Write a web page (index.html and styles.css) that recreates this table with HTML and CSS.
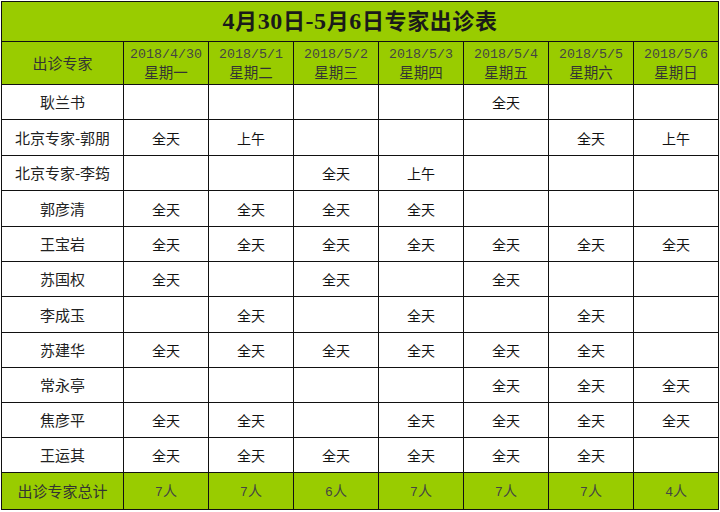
FILE: index.html
```html
<!DOCTYPE html>
<html lang="zh">
<head>
<meta charset="utf-8">
<title>专家出诊表</title>
<link rel="stylesheet" href="styles.css">
</head>
<body>
<div class="wrap">
<table class="sched">
<colgroup>
<col class="c-name"><col class="c-day"><col class="c-day"><col class="c-day"><col class="c-day"><col class="c-day"><col class="c-day"><col class="c-day">
</colgroup>
<thead>
<tr class="r-title"><th colspan="8" class="title"><span class="num">4</span>月<span class="num">30</span>日<span class="num">-5</span>月<span class="num">6</span>日专家出诊表</th></tr>
<tr class="r-head">
<th class="h-name">出诊专家</th>
<th><span class="date">2018/4/30</span><span class="wd">星期一</span></th>
<th><span class="date">2018/5/1</span><span class="wd">星期二</span></th>
<th><span class="date">2018/5/2</span><span class="wd">星期三</span></th>
<th><span class="date">2018/5/3</span><span class="wd">星期四</span></th>
<th><span class="date">2018/5/4</span><span class="wd">星期五</span></th>
<th><span class="date">2018/5/5</span><span class="wd">星期六</span></th>
<th><span class="date">2018/5/6</span><span class="wd">星期日</span></th>
</tr>
</thead>
<tbody>
<tr class="r-a"><td class="name">耿兰书</td><td></td><td></td><td></td><td></td><td>全天</td><td></td><td></td></tr>
<tr class="r-b"><td class="name">北京专家-郭朋</td><td>全天</td><td>上午</td><td></td><td></td><td></td><td>全天</td><td>上午</td></tr>
<tr class="r-a"><td class="name">北京专家-李筠</td><td></td><td></td><td>全天</td><td>上午</td><td></td><td></td><td></td></tr>
<tr class="r-b"><td class="name">郭彦清</td><td>全天</td><td>全天</td><td>全天</td><td>全天</td><td></td><td></td><td></td></tr>
<tr class="r-a"><td class="name">王宝岩</td><td>全天</td><td>全天</td><td>全天</td><td>全天</td><td>全天</td><td>全天</td><td>全天</td></tr>
<tr class="r-a"><td class="name">苏国权</td><td>全天</td><td></td><td>全天</td><td></td><td>全天</td><td></td><td></td></tr>
<tr class="r-b"><td class="name">李成玉</td><td></td><td>全天</td><td></td><td>全天</td><td></td><td>全天</td><td></td></tr>
<tr class="r-a"><td class="name">苏建华</td><td>全天</td><td>全天</td><td>全天</td><td>全天</td><td>全天</td><td>全天</td><td></td></tr>
<tr class="r-a"><td class="name">常永亭</td><td></td><td></td><td></td><td></td><td>全天</td><td>全天</td><td>全天</td></tr>
<tr class="r-a"><td class="name">焦彦平</td><td>全天</td><td>全天</td><td></td><td>全天</td><td>全天</td><td>全天</td><td>全天</td></tr>
<tr class="r-a"><td class="name">王运其</td><td>全天</td><td>全天</td><td>全天</td><td>全天</td><td>全天</td><td>全天</td><td></td></tr>
</tbody>
<tfoot>
<tr class="r-foot">
<td class="f-name">出诊专家总计</td>
<td><span class="num-s">7</span>人</td>
<td><span class="num-s">7</span>人</td>
<td><span class="num-s">6</span>人</td>
<td><span class="num-s">7</span>人</td>
<td><span class="num-s">7</span>人</td>
<td><span class="num-s">7</span>人</td>
<td><span class="num-s">4</span>人</td>
</tr>
</tfoot>
</table>
</div>
</body>
</html>
```

FILE: styles.css
```css
html, body {
  margin: 0;
  padding: 0;
  background: #ffffff;
}
.wrap {
  padding: 1px 0 0 1px;
}
.sched {
  border-collapse: collapse;
  table-layout: fixed;
  width: 718px;
  font-family: "Noto Sans CJK SC", "Noto Sans", sans-serif;
  color: #111;
}
.c-name { width: 122px; }
.c-day { width: 85px; }
.sched th, .sched td {
  border: 1px solid #111;
  padding: 0;
  text-align: center;
  vertical-align: middle;
  font-weight: normal;
  font-size: 14px;
  line-height: 16px;
}
.r-title th, .r-head th, .r-foot td {
  background: #99cc00;
}
.r-title { height: 40px; }
.title {
  font-family: "Liberation Serif", "Noto Sans CJK SC", serif;
  font-weight: bold !important;
  font-size: 22px !important;
  line-height: 24px !important;
  color: #1a1a1a;
  letter-spacing: 0.6px;
}
.title .num {
  font-family: "Liberation Serif", serif;
  font-size: 24px;
}
.r-head { height: 43px; }
.r-head th { color: #333; }
.h-name { font-size: 15px !important; }
.date {
  display: block;
  font-family: "Liberation Mono", monospace;
  font-size: 13.3px;
  line-height: 16px;
  color: #444;
}
.wd {
  display: block;
  font-size: 14.5px;
  line-height: 17px;
  color: #333;
}
.r-a { height: 35px; }
.r-b { height: 36px; }
.name {
  font-size: 15px !important;
  color: #222;
}
.r-foot { height: 37px; }
.r-foot td {
  font-size: 14px;
  color: #444;
}
.f-name {
  font-size: 15px !important;
  color: #333 !important;
}
.num-s {
  font-family: "Liberation Mono", monospace;
  font-size: 13px;
}
```
